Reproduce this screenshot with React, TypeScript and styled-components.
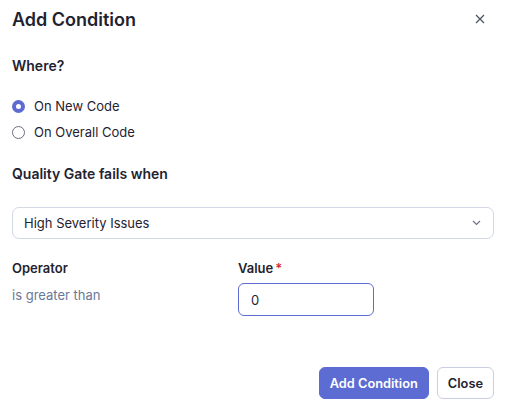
import React, { useState } from 'react';
import styled, { createGlobalStyle } from 'styled-components';

const PRIMARY = '#5d6cd3';
const TEXT = '#1f2330';
const MUTED = '#6a7898';
const BORDER = '#d3d7e6';

const GlobalStyle = createGlobalStyle`
  body {
    margin: 0;
    background: #fff;
    font-family: Inter, 'Noto Sans', sans-serif;
    color: ${TEXT};
  }
  * { box-sizing: border-box; }
`;

const Modal = styled.div`
  display: flex;
  flex-direction: column;
  padding: 0 18px 0 12px;
`;
const Header = styled.div`
  display: flex;
  align-items: center;
  justify-content: space-between;
  height: 38px;
`;
const Title = styled.h1`
  margin: 0;
  font-size: 18px;
  font-weight: 600;
`;
const CloseIcon = styled.button`
  display: flex;
  align-items: center;
  justify-content: center;
  width: 24px;
  height: 24px;
  margin-right: 2px;
  padding: 0;
  border: none;
  background: none;
  color: #4b5064;
`;
const Label = styled.div<{ $top: number; $size?: number }>`
  margin-top: ${(p) => p.$top}px;
  font-size: ${(p) => p.$size ?? 14}px;
  font-weight: 600;
  line-height: 20px;
`;
const RadioGroup = styled.div`
  display: flex;
  flex-direction: column;
  gap: 6px;
  margin-top: 20px;
`;
const RadioRow = styled.label`
  display: flex;
  align-items: center;
  gap: 9px;
  height: 20px;
  font-size: 13px;
`;
const RadioDot = styled.span<{ $checked: boolean }>`
  width: 13px;
  height: 13px;
  border-radius: 50%;
  border: ${(p) => (p.$checked ? `4px solid ${PRIMARY}` : '1px solid #6b7080')};
  background: #fff;
`;
const Select = styled.div`
  display: flex;
  align-items: center;
  justify-content: space-between;
  margin-top: 23px;
  height: 32px;
  padding: 0 12px 0 11px;
  border: 1px solid ${BORDER};
  border-radius: 7px;
  font-size: 13px;
`;
const Fields = styled.div`
  display: grid;
  grid-template-columns: 226px 1fr;
  margin-top: 19px;
`;
const Field = styled.div`
  display: flex;
  flex-direction: column;
`;
const Required = styled.span`
  color: #d02f3a;
  margin-left: 2px;
`;
const Operator = styled.div`
  margin-top: 7px;
  font-size: 13px;
  line-height: 20px;
  color: ${MUTED};
`;
const Input = styled.input`
  margin-top: 5px;
  width: 136px;
  height: 33px;
  padding: 0 12px;
  border: 1.5px solid ${PRIMARY};
  border-radius: 6px;
  font-family: inherit;
  font-size: 13px;
  color: ${TEXT};
  outline: none;
`;
const Footer = styled.div`
  display: flex;
  justify-content: flex-end;
  gap: 8px;
  margin-top: 51px;
`;
const Button = styled.button<{ $primary?: boolean }>`
  height: 32px;
  padding: 0 10px;
  border-radius: 6px;
  border: 1px solid ${(p) => (p.$primary ? PRIMARY : '#c9cee0')};
  background: ${(p) => (p.$primary ? PRIMARY : '#fff')};
  color: ${(p) => (p.$primary ? '#fff' : TEXT)};
  font-family: inherit;
  font-size: 12.8px;
  font-weight: 600;
`;

const App: React.FC = () => {
  const [where, setWhere] = useState('new');
  return (
    <Modal>
      <GlobalStyle />
      <Header>
        <Title>Add Condition</Title>
        <CloseIcon>
          <svg width="10" height="10" viewBox="0 0 10 10" fill="none" stroke="currentColor" strokeWidth="1.2">
            <path d="M1 1l8 8M9 1l-8 8" />
          </svg>
        </CloseIcon>
      </Header>
      <Label $top={18}>Where?</Label>
      <RadioGroup>
        <RadioRow onClick={() => setWhere('new')}>
          <RadioDot $checked={where === 'new'} />
          On New Code
        </RadioRow>
        <RadioRow onClick={() => setWhere('overall')}>
          <RadioDot $checked={where === 'overall'} />
          On Overall Code
        </RadioRow>
      </RadioGroup>
      <Label $top={22}>Quality Gate fails when</Label>
      <Select>
        High Severity Issues
        <svg width="9" height="6" viewBox="0 0 9 6" fill="none" stroke="#6b7287" strokeWidth="1.2">
          <path d="M1 1l3.5 3.5L8 1" />
        </svg>
      </Select>
      <Fields>
        <Field>
          <Label $top={0} $size={13}>Operator</Label>
          <Operator>is greater than</Operator>
        </Field>
        <Field>
          <Label $top={0} $size={13}>
            Value<Required>*</Required>
          </Label>
          <Input defaultValue="0" />
        </Field>
      </Fields>
      <Footer>
        <Button $primary>Add Condition</Button>
        <Button>Close</Button>
      </Footer>
    </Modal>
  );
};

export default App;
